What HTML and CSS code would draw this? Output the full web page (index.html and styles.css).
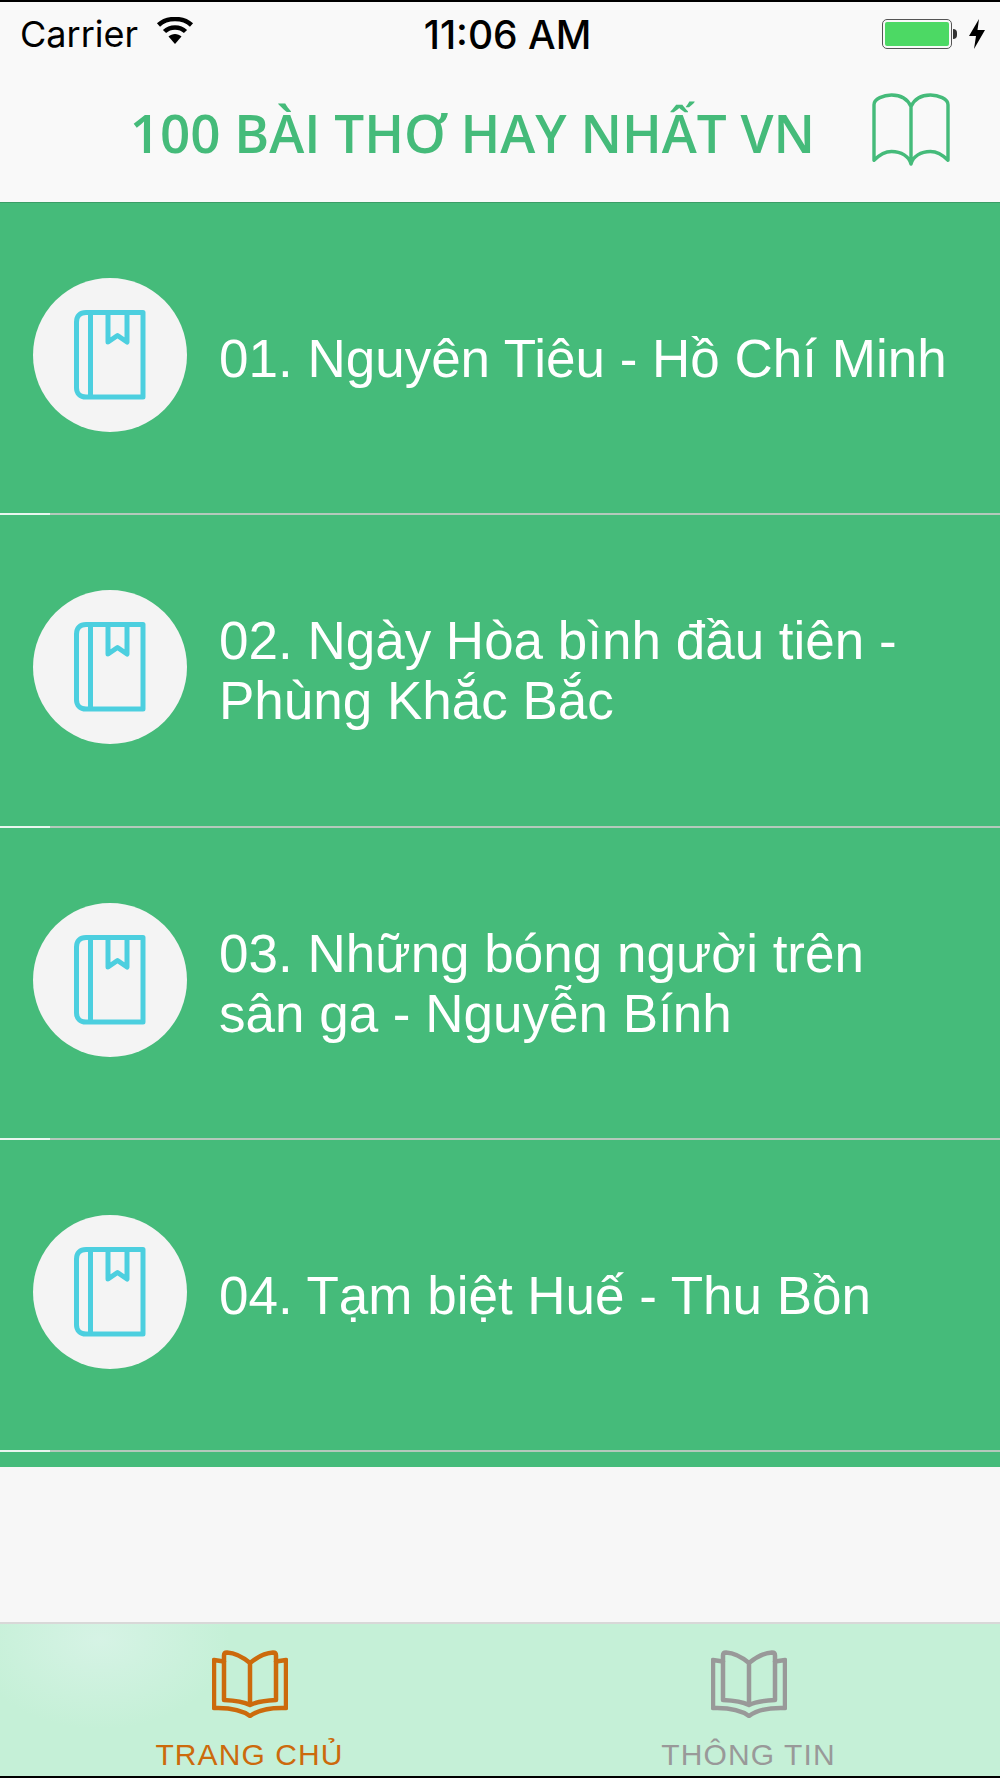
FILE: index.html
```html
<!DOCTYPE html>
<html lang="vi">
<head>
    <meta charset="UTF-8" />
    <title>100 Bài Thơ Hay Nhất VN</title>
    <link rel="stylesheet" href="styles.css">
</head>
<body>
<svg class="defs" width="0" height="0">
    <symbol id="book-closed" viewBox="0 0 154 154">
        <path d="M53 34.500H110V119H53C47 119 43.500 115 43.500 110V44C43.500 38 47 34.500 53 34.500Z" fill="none" stroke="currentColor" stroke-width="5" stroke-linejoin="round"/>
        <path d="M57.500 34.500V119M75 34.500V64L84.500 57.500L94 64V34.500" fill="none" stroke="currentColor" stroke-width="5" stroke-linejoin="round"/>
    </symbol>
    <symbol id="book-open" viewBox="0 0 76 68">
        <path d="M2 10L12 11.500M74 10L64 11.500M2 10V58C16 57.500 30 60 38 66C46 60 60 57.500 74 58V10" fill="none" stroke="currentColor" stroke-width="4.500" stroke-linejoin="round" stroke-linecap="round"/>
        <path d="M38 13C32 8 23 3 15 2.500C13 2.500 12 3.500 12 5.500V50C22 50.500 32 52 38 55C44 52 54 50.500 64 50V5.500C64 3.500 63 2.500 61 2.500C53 3 44 8 38 13ZM38 13V55" fill="none" stroke="currentColor" stroke-width="4.500" stroke-linejoin="round"/>
    </symbol>
</svg>

<div class="man">
    <div class="status">
        <div class="status-left">
            <span>Carrier</span>
            <svg class="wifi" viewBox="0 0 38 28">
                <path d="M19 27L12.500 19.500C16 16 22 16 25.500 19.500Z" fill="#000"/>
                <path d="M8.500 14.500C14 9 24 9 29.500 14.500" fill="none" stroke="#000" stroke-width="4.500"/>
                <path d="M2.500 8C11 0 27 0 35.500 8" fill="none" stroke="#000" stroke-width="4.500"/>
            </svg>
        </div>
        <div class="status-time">11:06 AM</div>
        <div class="status-right">
            <span class="battery"><span class="battery-fill"></span></span>
            <span class="battery-tip"></span>
            <svg class="bolt" viewBox="0 0 16 30">
                <path d="M10 0L0 17H7L5 30L16 11H8.500Z" fill="#000"/>
            </svg>
        </div>
    </div>

    <div class="nav">
        <div class="nav-title">100 BÀI THƠ HAY NHẤT VN</div>
        <svg class="nav-book" viewBox="0 0 80 76">
            <path d="M2 69V12C2 6 12 2 20 2C30 2 37 7 40 14C43 7 50 2 60 2C68 2 78 6 78 12V69C72 63 66 60 60 60C50 60 42 65 40 73C38 65 30 60 20 60C14 60 8 63 2 69ZM40 14V73" fill="none" stroke="#45bb7a" stroke-width="3.500" stroke-linejoin="round" stroke-linecap="round"/>
        </svg>
    </div>

    <div class="list">
        <div class="row">
            <div class="row-icon"><svg><use href="#book-closed"/></svg></div>
            <div class="row-text">01. Nguyên Tiêu - Hồ Chí Minh</div>
        </div>
        <div class="row">
            <div class="row-icon"><svg><use href="#book-closed"/></svg></div>
            <div class="row-text">02. Ngày Hòa bình đầu tiên - Phùng Khắc Bắc</div>
        </div>
        <div class="row">
            <div class="row-icon"><svg><use href="#book-closed"/></svg></div>
            <div class="row-text">03. Những bóng người trên sân ga - Nguyễn Bính</div>
        </div>
        <div class="row">
            <div class="row-icon"><svg><use href="#book-closed"/></svg></div>
            <div class="row-text">04. Tạm biệt Huế - Thu Bồn</div>
        </div>
    </div>

    <div class="blank"></div>

    <div class="tabs">
        <div class="tab tab-active">
            <svg><use href="#book-open"/></svg>
            <span>TRANG CHỦ</span>
        </div>
        <div class="tab">
            <svg><use href="#book-open"/></svg>
            <span>THÔNG TIN</span>
        </div>
    </div>
</div>
</body>
</html>
```

FILE: styles.css
```css
body {
    margin: 0;
    font-family: "Liberation Sans", Arial, sans-serif;
    background-color: #000;
}

.defs {
    position: absolute;
}

.man {
    height: 1774px;
    margin-top: 2px;
    display: flex;
    flex-direction: column;
    background-color: #f7f7f7;
}

/* status bar */
.status {
    height: 64px;
    padding: 0 15px 0 20px;
    display: grid;
    grid-template-columns: 1fr auto 1fr;
    align-items: center;
    background-color: #f9f9f9;
    color: #000;
    font-family: Inter, sans-serif;
    font-size: 36px;
}

.status-left {
    display: flex;
    align-items: center;
    gap: 18px;
}

.wifi {
    width: 38px;
    height: 28px;
    margin-top: -6px;
}

.status-time {
    font-size: 39px;
    font-weight: 500;
    padding-left: 10px;
}

.status-right {
    display: flex;
    align-items: center;
    justify-content: flex-end;
}

.battery {
    width: 70px;
    height: 30px;
    padding: 2px;
    box-sizing: border-box;
    border: 1.500px solid #555;
    border-radius: 5px;
    display: flex;
}

.battery-fill {
    flex: 1;
    background-color: #4cd964;
    border-radius: 2px;
}

.battery-tip {
    width: 4px;
    height: 10px;
    margin-left: 1px;
    background-color: #333;
    border-radius: 0 5px 5px 0;
}

.bolt {
    width: 16px;
    height: 30px;
    margin-left: 12px;
}

/* nav bar */
.nav {
    height: 136px;
    padding-right: 50px;
    display: flex;
    align-items: center;
    justify-content: flex-end;
    gap: 57px;
    background-color: #f9f9f9;
    border-bottom: 1px solid #3a9d66;
}

.nav-title {
    font-family: "Open Sans", sans-serif;
    font-weight: 600;
    font-size: 53px;
    margin-bottom: 4px;
    color: #45bb7a;
    white-space: nowrap;
}

.nav-book {
    width: 78px;
    height: 74px;
    margin-bottom: 9px;
}

/* list */
.list {
    background-color: #45bb7a;
    padding-bottom: 15px;
}

.row {
    height: 312.300px;
    box-sizing: border-box;
    padding-left: 33px;
    display: flex;
    align-items: center;
    gap: 32px;
    color: #fff;
    background-image: linear-gradient(to right, #e9f6ef 50px, #b4c9bc 50px);
    background-repeat: no-repeat;
    background-size: 100% 2px;
    background-position: bottom;
}

.row-icon {
    width: 154px;
    height: 154px;
    flex: none;
    margin-bottom: 8px;
    border-radius: 50%;
    background-color: #f4f4f4;
    color: #4ccfdf;
}

.row-icon svg {
    display: block;
    width: 154px;
    height: 154px;
}

.row-text {
    font-size: 53px;
    line-height: 60px;
    padding-right: 40px;
}

.blank {
    flex: 1;
}

/* tab bar */
.tabs {
    height: 152px;
    padding-right: 2px;
    display: flex;
    border-top: 2px solid #d8d8d8;
    background-color: #c5f0d7;
    background-image: radial-gradient(ellipse 130px 90px at 100px 15px, #d6f3e5, #c5f0d7);
}

.tab {
    flex: 1;
    padding-top: 26px;
    display: flex;
    flex-direction: column;
    align-items: center;
    color: #999;
    font-size: 30px;
    letter-spacing: 1.100px;
}

.tab svg {
    width: 76px;
    height: 68px;
}

.tab span {
    margin-top: 20px;
}

.tab-active {
    color: #cc6a0c;
}
```
